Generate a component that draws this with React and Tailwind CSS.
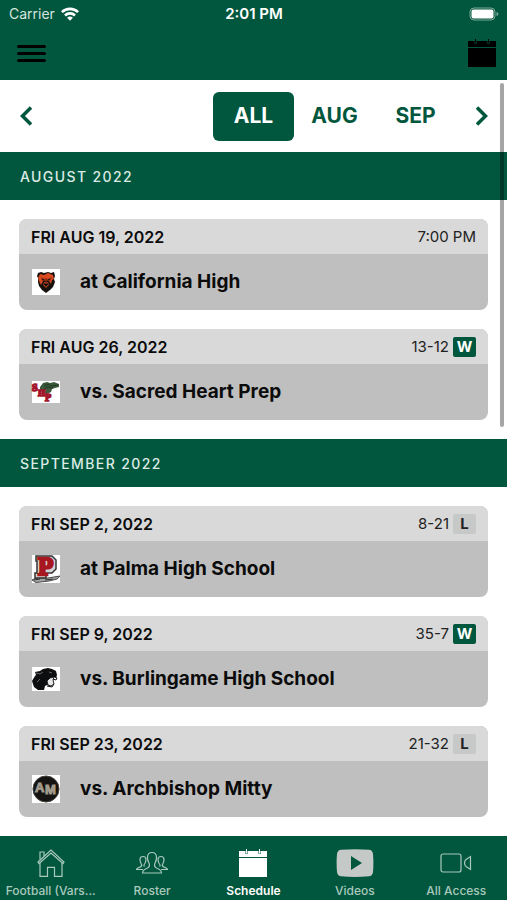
import { useState } from 'react';

const games = [
  {
    month: 'AUGUST 2022',
    items: [
      { date: 'FRI AUG 19, 2022', opponent: 'at California High', time: '7:00 PM', logo: BearLogo },
      { date: 'FRI AUG 26, 2022', opponent: 'vs. Sacred Heart Prep', score: '13-12', result: 'W', logo: GatorLogo },
    ],
  },
  {
    month: 'SEPTEMBER 2022',
    items: [
      { date: 'FRI SEP 2, 2022', opponent: 'at Palma High School', score: '8-21', result: 'L', logo: PalmaLogo },
      { date: 'FRI SEP 9, 2022', opponent: 'vs. Burlingame High School', score: '35-7', result: 'W', logo: PantherLogo },
      { date: 'FRI SEP 23, 2022', opponent: 'vs. Archbishop Mitty', score: '21-32', result: 'L', logo: MittyLogo },
    ],
  },
];

const tabs = [
  { label: 'Football (Vars...', icon: HomeIcon },
  { label: 'Roster', icon: RosterIcon },
  { label: 'Schedule', icon: CalendarIcon },
  { label: 'Videos', icon: VideosIcon },
  { label: 'All Access', icon: CameraIcon },
];

function BearLogo() {
  return (
    <svg viewBox="0 0 28 26" className="w-7">
      <rect width="28" height="26" fill="#fff" />
      <path d="M6 4l3-1 3 1 4-1 3 1 3-1 1 4-1 3 1 3-2 5-3 3-4 3-4-3-3-4-1-4V9L5 7z" fill="#17110e" />
      <path d="M8 5l4 1 4-2 5 2 1 4-2 1-1 4-2-3-3-2-3 2-2 4-2-4-1-3z" fill="#d94a20" />
      <path d="M9 8l3 2 2-1 2 1 4-2-2 4-2-1-2 2-2-2-2 1z" fill="#8c2a12" />
      <path d="M12 13h4l1 3-3 3-3-3z" fill="#a23a1c" />
      <path d="M12 15h4l-2 2zM10 10l2 1M18 10l-2 1" fill="#17110e" stroke="#17110e" strokeWidth="1" />
    </svg>
  );
}

function GatorLogo() {
  return (
    <svg viewBox="0 0 28 22" className="w-7 overflow-visible">
      <rect width="28" height="22" fill="#fff" />
      <path d="M8 6l3-4 4-1 3 1 4-1 5 2v3l-4 1-3 1-1 3-4 2-4-1-3-2z" fill="#3c5a3b" />
      <path d="M12 5l4-2 3 2 7-1M11 9l4-3 6 1" fill="none" stroke="#1f3420" strokeWidth="1" />
      <g fontFamily="Liberation Serif, serif" fontWeight="700" fill="#a3152b" stroke="#a3152b" strokeWidth="1.500">
        <text x="0" y="10" fontSize="10">S</text>
        <text x="6" y="15" fontSize="9">H</text>
        <text x="13" y="20" fontSize="10">P</text>
      </g>
    </svg>
  );
}

function PalmaLogo() {
  return (
    <svg viewBox="0 0 28 28" className="w-7 overflow-visible">
      <rect width="28" height="28" fill="#fff" />
      <path d="M0 25l4-2h12l12-2-3 3-8 2-13 1.500z" fill="#a5a5a5" stroke="#4a4a4a" strokeWidth="1" />
      <path d="M4 1h16l4 4v9l-4 4h-6v5H3v-5h2V6H4z" fill="#d5d5d5" stroke="#333" strokeWidth="1.500" />
      <text x="6" y="20" fontFamily="Liberation Serif, serif" fontWeight="700" fontSize="25" fill="#a8161f" stroke="#a8161f" strokeWidth="2.500">P</text>
      <path d="M2 25l6-1M13 25l8-1" stroke="#333" strokeWidth="1" />
    </svg>
  );
}

function PantherLogo() {
  return (
    <svg viewBox="0 0 28 24" className="w-7">
      <rect width="28" height="24" fill="#fff" />
      <path d="M0 14l3-5 1-1-1-3 5-1 3-2 5-1 4 1 4 2 1 4-1 3-2-1-4 2-2 3 2 4-3-1-2 1-1 4H6l-4-3z" fill="#0d0e10" />
      <path d="M15 14l3-3 4-1-1 3 1 4-3 2-3-1z" fill="#e8e8e8" stroke="#222" strokeWidth="1" />
      <path d="M21 9l4 2-1 2-3-1M15 19l5 1 2-3" fill="none" stroke="#111" strokeWidth="1" />
      <path d="M4 6l4 1 3-2M17 5l3 1M5 15l3-3" fill="none" stroke="#666" strokeWidth="1" />
    </svg>
  );
}

function MittyLogo() {
  return (
    <svg viewBox="0 0 28 28" className="w-7 overflow-visible">
      <rect width="28" height="28" fill="#fff" />
      <circle cx="14" cy="14" r="13" fill="#161412" stroke="#44423c" strokeWidth="1" />
      <g fontFamily="Liberation Sans, sans-serif" fontWeight="700" fill="#a39c8c" stroke="#a39c8c" strokeWidth="1">
        <text x="3" y="17" fontSize="13">A</text>
        <text x="13" y="19" fontSize="13">M</text>
      </g>
    </svg>
  );
}

function HomeIcon() {
  return (
    <svg viewBox="0 0 28 28" className="h-7 w-7" fill="none" stroke="currentColor" strokeWidth="1.200">
      <path d="M1 13L14 1l13 12-1 1.500L14 4 2 14.500z" />
      <path d="M3 10.500V3h4v4" />
      <path d="M3 14v13.300h7.500v-9h7v9H25V14" />
    </svg>
  );
}

function RosterIcon() {
  return (
    <svg viewBox="0 0 32 28" className="h-7 w-8" fill="none" stroke="currentColor" strokeWidth="1.200">
      <path d="M16 3.500c3 0 4.500 2 4.500 5 0 2.500-.5 4-1.500 5.500-1 2.500-.5 4 1.500 5 3.500 1.500 5 2.500 5 5h-19c0-2.500 1.500-3.500 5-5 2-1 2.500-2.500 1.500-5-1-1.500-1.500-3-1.500-5.500 0-3 1.500-5 4.500-5z" />
      <path d="M8.500 17.500c-.8-.6-.8-1.500 0-2.500C9.600 13.500 10 12 10 10.500 10 8.500 8.800 7.500 7 7.500S4 8.500 4 10.500c0 1.500.4 3 1.300 4.500.9 1.500.2 2.500-1.800 3.300C1.700 19 .7 19.500.5 20.500H7" />
      <path d="M23.500 17.500c.8-.6.8-1.500 0-2.500-1.100-1.500-1.500-3-1.500-4.500 0-2 1.200-3 3-3s3 1 3 3c0 1.500-.4 3-1.300 4.500-.9 1.500-.2 2.500 1.800 3.300 1.800.7 2.800 1.200 3 2.200H25" />
    </svg>
  );
}

function CalendarIcon() {
  return (
    <svg viewBox="0 0 28 28" className="h-7 w-7">
      <path d="M0 2h28v26H0z" fill="currentColor" />
      <path d="M0 8.500h28" stroke="#01573d" strokeWidth="1" />
      <path d="M7.500 1v4M20.500 1v4" stroke="#01573d" strokeWidth="2" />
      <path d="M7.500 0v4.500M20.500 0v4.500" stroke="currentColor" strokeWidth="1" />
    </svg>
  );
}

function VideosIcon() {
  return (
    <svg viewBox="0 0 38 28" className="h-7 w-[38px]">
      <path d="M5 .8Q19-.5 33 .8 36.500 1 37 5q.8 9 0 18-.5 4-4 4.300-14 1.200-28 0Q1.500 27 1 23 .2 14 1 5 1.500 1 5 .8z" fill="#c4c8c7" />
      <path d="M15 7l11 7-11 7z" fill="#01573d" />
    </svg>
  );
}

function CameraIcon() {
  return (
    <svg viewBox="0 0 32 28" className="h-7 w-8" fill="none" stroke="currentColor" strokeWidth="1.200">
      <rect x="1" y="5" width="20" height="18" rx="2" />
      <path d="M30.500 7.500v13L26 17.500c-2-1.500-2-5.500 0-7z" />
    </svg>
  );
}

function StatusBar() {
  return (
    <div className="grid h-7 grid-cols-3 items-center pr-2 pl-[9px] text-white">
      <div className="flex items-center gap-[6px] text-[14px] leading-6 text-[#d5e5df]">
        Carrier
        <svg viewBox="0 0 18 14" className="w-[18px]" fill="none" stroke="#fff" strokeWidth="2.600">
          <path d="M.9 5.200a11.500 11.500 0 0 1 16.200 0M4 8.500a7 7 0 0 1 10 0" />
          <path d="M9 13.800l-2.900-3a4.200 4.200 0 0 1 5.800 0z" fill="#fff" stroke="none" />
        </svg>
      </div>
      <div className="text-center text-[15px] font-semibold">2:01 PM</div>
      <svg viewBox="0 0 30 14" className="w-[30px] justify-self-end">
        <rect x="1" y="1" width="25" height="12" rx="4" fill="none" stroke="#7da997" strokeWidth="1" />
        <rect x="2.500" y="2.500" width="22" height="9" rx="2" fill="#fff" />
        <path d="M27.500 5q2 .5 2 2t-2 2z" fill="#7da997" />
      </svg>
    </div>
  );
}

function GameCard({ game }) {
  const Logo = game.logo;

  return (
    <li className="overflow-hidden rounded-lg bg-[#bfbfbf] text-[#0b0b0b]">
      <div className="flex h-[35px] items-center justify-between bg-[#d9d9d9] px-3">
        <span className="text-[16px] leading-6 font-semibold">{game.date}</span>
        <div className="flex items-center gap-1 text-[15px] leading-6 text-[#222]">
          {game.time || game.score}
          {game.result === 'W' && (
            <span className="w-[23px] rounded-xs bg-[#01573d] text-center leading-5 font-bold text-white">W</span>
          )}
          {game.result === 'L' && (
            <span className="w-[23px] rounded-xs bg-[#c7c9c9] text-center leading-5 font-bold">L</span>
          )}
        </div>
      </div>
      <div className="flex h-14 items-center gap-5 px-[13px]">
        <Logo />
        <span className="text-[19px] leading-7 font-bold">{game.opponent}</span>
      </div>
    </li>
  );
}

const App = () => {
  const [month, setMonth] = useState('ALL');
  const [tab, setTab] = useState('Schedule');

  return (
    <div className="flex min-h-screen flex-col bg-white font-['Inter',sans-serif]">

      <header className="h-20 bg-[#01573d]">
        <StatusBar />
        <div className="flex h-[50px] items-center justify-between pr-[11px] pl-[17px]">
          <button aria-label="Menu" className="flex w-[29px] flex-col gap-1">
            <span className="h-[3px] rounded-full bg-black" />
            <span className="h-[3px] rounded-full bg-black" />
            <span className="h-[3px] rounded-full bg-black" />
          </button>
          <button aria-label="Calendar" className="text-black">
            <CalendarIcon />
          </button>
        </div>
      </header>

      <main className="relative flex-1">
        <div className="flex h-[72px] items-center text-[#01573d]">
          <button aria-label="Previous" className="flex w-[51px] justify-center">
            <svg viewBox="0 0 12 20" className="h-5" fill="none" stroke="currentColor" strokeWidth="3.500">
              <path d="M11 1.500L2.500 10l8.500 8.500" />
            </svg>
          </button>
          <div className="flex flex-1 justify-end">
            {['ALL', 'AUG', 'SEP'].map((name) => (
              <button
                key={name}
                onClick={() => setMonth(name)}
                className={`h-[49px] w-[81px] rounded-md text-[21px] leading-8 font-bold ${month === name ? 'bg-[#01573d] text-white' : ''}`}
              >
                {name}
              </button>
            ))}
          </div>
          <button aria-label="Next" className="flex w-[51px] justify-center">
            <svg viewBox="0 0 12 20" className="h-5" fill="none" stroke="currentColor" strokeWidth="3.500">
              <path d="M1 1.500L9.500 10 1 18.500" />
            </svg>
          </button>
        </div>

        {games.map((group) => (
          <section key={group.month}>
            <h2 className="flex h-12 items-center bg-[#01573d] px-5 text-[14px] font-medium tracking-widest text-[#dcebe5]">
              {group.month}
            </h2>
            <ul className="flex flex-col gap-[19px] p-[19px]">
              {group.items.map((game) => (
                <GameCard key={game.date} game={game} />
              ))}
            </ul>
          </section>
        ))}

        {/* scroll indicator */}
        <div className="absolute top-[3px] right-[3px] h-[344px] w-1 rounded-full bg-black/35" />
      </main>

      <nav className="sticky bottom-0 grid h-16 grid-cols-5 bg-[#01573d]">
        {tabs.map(({ label, icon: Icon }) => (
          <a
            key={label}
            href="#"
            onClick={() => setTab(label)}
            className={`flex min-w-0 flex-col items-center gap-1 pt-[13px] text-[12px] leading-5 ${tab === label ? 'font-semibold text-white' : 'font-medium text-[#a9c9bd]'}`}
          >
            <Icon />
            <span className="max-w-full truncate">{label}</span>
          </a>
        ))}
      </nav>
    </div>
  );
};

export default App;
